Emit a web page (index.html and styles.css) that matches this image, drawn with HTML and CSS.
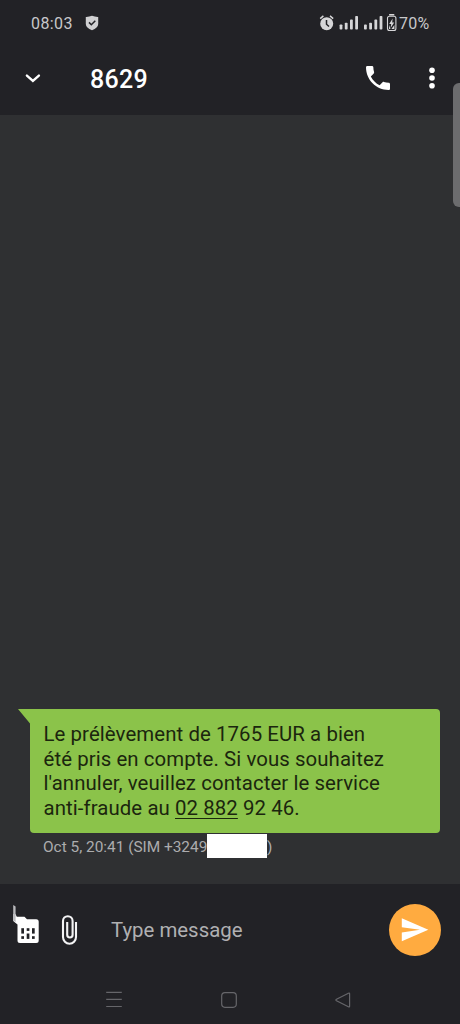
FILE: index.html
```html
<!DOCTYPE html>
<html lang="fr">
<head>
<meta charset="utf-8">
<title>8629</title>
<link rel="stylesheet" href="styles.css">
</head>
<body>
<div class="phone">
  <header class="top">
    <div class="status">
      <span class="clock">08:03</span>
      <svg class="shield" width="14" height="16" viewBox="0 0 14 16"><path d="M7 .8 Q10 2 13.2 1.9 V9 Q13 13 7 15.2 Q1 13 .8 9 V1.9 Q4 2 7 .8Z" fill="#d0d0d2"/><path d="M4 7.4l2.3 2.3 4-4" fill="none" stroke="#222226" stroke-width="1.5"/></svg>
      <svg class="indicators" width="78" height="20" viewBox="319 13 78 20">
        <g fill="#d6d6d8">
          <circle cx="326.7" cy="23.7" r="6.5"/>
          <path d="M326.5 20v4.2l2.5 2.3" fill="none" stroke="#222226" stroke-width="1.5"/>
          <path d="M320.2 18.6l3.2-2.7M333.2 18.6l-3.2-2.7" stroke="#d6d6d8" stroke-width="1.5" fill="none"/>
          <rect x="339.6" y="24.5" width="2.8" height="5" rx=".8"/><rect x="344.8" y="22.8" width="2.8" height="6.7" rx=".8"/><rect x="350" y="19.6" width="2.8" height="9.9" rx=".8"/><rect x="355.2" y="16" width="2.8" height="13.5" rx=".8"/>
          <rect x="364" y="24.5" width="2.8" height="5" rx=".8"/><rect x="369.2" y="22.8" width="2.8" height="6.7" rx=".8"/><rect x="374.4" y="19.6" width="2.8" height="9.9" rx=".8"/><rect x="379.6" y="16" width="2.8" height="13.5" rx=".8"/>
          <rect x="389" y="14" width="5.4" height="1.6" rx=".6"/>
          <rect x="387.5" y="16.2" width="8.4" height="14.3" rx="2" fill="none" stroke="#d6d6d8" stroke-width="1.1"/>
          <path d="M392.6 18.5l-3.4 5.5h2l-.6 4 3.6-5.5h-2z"/><path d="M389 25l1.5 4h-1.5zM394.4 25v4h-3z"/>
        </g>
      </svg>
      <span class="percent">70%</span>
    </div>
    <div class="bar">
      <svg class="chevron" width="18" height="12" viewBox="24 72 18 12"><path d="M26.9 75.6l6 5.4 6-5.4" fill="none" stroke="#fff" stroke-width="2.4" stroke-linecap="round"/></svg>
      <h1 class="title">8629</h1>
      <svg class="call" width="24" height="24" viewBox="3 3 18 18"><path fill="#fff" d="M6.62 10.79c1.44 2.83 3.76 5.14 6.59 6.59l2.2-2.2c.27-.27.67-.36 1.02-.24 1.12.37 2.33.57 3.57.57.55 0 1 .45 1 1V20c0 .55-.45 1-1 1-9.39 0-17-7.61-17-17 0-.55.45-1 1-1h3.5c.55 0 1 .45 1 1 0 1.25.2 2.45.57 3.57.11.35.03.74-.25 1.02l-2.2 2.2z"/></svg>
      <svg class="more" width="6" height="22" viewBox="0 0 6 22" fill="#fff"><circle cx="3" cy="3.2" r="2.8"/><circle cx="3" cy="11" r="2.8"/><circle cx="3" cy="18.8" r="2.8"/></svg>
    </div>
  </header>
  <main class="thread">
    <div class="scroll-handle"></div>
    <div class="bubble">
      <svg class="tail" width="13" height="16" viewBox="0 0 13 16"><path d="M0 0H13V16L12 14.5Z" fill="#8bc34a"/></svg>
      Le prélèvement de 1765 EUR a bien<br>été pris en compte. Si vous souhaitez<br>l'annuler, veuillez contacter le service<br>anti-fraude au <span class="link">02 882</span> 92 46.
    </div>
    <div class="meta"><span class="when">Oct 5, 20:41 (SIM +3249</span><span class="redacted"></span><span>)</span></div>
  </main>
  <footer class="bottom">
    <div class="compose">
      <svg class="sim" width="28" height="40" viewBox="12 904 28 40"><path d="M13.2 914H15.4L16.8 916.7H24.5L27 919.3H36.2a2.5 2.5 0 0 1 2.5 2.5v18.6a2.5 2.5 0 0 1-2.5 2.5H20a2.5 2.5 0 0 1-2.5-2.5V924.5L13.2 921Z" fill="#fff"/><path d="M13.2 905l2.4 1.4v15.6l-2.4-1.6z" fill="#b8b8bb"/><g fill="#222226"><rect x="21.3" y="928.2" width="2.7" height="5.4"/><rect x="26.7" y="928.2" width="2.7" height="2.7"/><rect x="32" y="928.2" width="2.7" height="5.4"/><rect x="21.3" y="936.2" width="2.7" height="2.7"/><rect x="26.7" y="933.5" width="2.7" height="5.4"/><rect x="32" y="936.2" width="2.7" height="2.7"/></g></svg>
      <svg class="clip" width="18" height="32" viewBox="60 914 18 32"><path d="M76 922V937a6.5 6.7 0 0 1-13 0V921a4.8 4.8 0 0 1 9.6 0v13.8a2.7 2.7 0 0 1-5.4 0V922" fill="none" stroke="#f4f4f5" stroke-width="2.1"/></svg>
      <span class="placeholder">Type message</span>
      <span class="send"><svg width="28" height="24" viewBox="401 918 28 24"><path d="M401.8 918.3L428.3 929.8 401.8 941.3V932.4L420 929.8 401.8 927.2Z" fill="#fff"/></svg></span>
    </div>
    <nav class="nav">
      <svg width="16" height="17" viewBox="0 0 16 17"><path d="M.2 1.3H15.8M.2 8.3H15.8M.2 15.5H15.8" stroke="#66666a" stroke-width="1.2"/></svg>
      <svg width="16" height="16" viewBox="0 0 16 16"><rect x=".7" y=".7" width="14.6" height="14.6" rx="3.2" fill="none" stroke="#66666a" stroke-width="1.2"/></svg>
      <svg width="16" height="16" viewBox="0 0 16 16"><path d="M14.6 1.8V14.2Q14.6 15.4 13.4 14.8L1.5 8.8Q.3 8 1.5 7.2L13.4 1.2Q14.6.6 14.6 1.8Z" fill="none" stroke="#66666a" stroke-width="1.2"/></svg>
    </nav>
  </footer>
</div>
</body>
</html>
```
FILE: styles.css
```css
* { box-sizing: border-box; }
body { margin: 0; background: #2f3032; font-family: Roboto, "Liberation Sans", sans-serif; }
svg { display: block; flex: none; }
.phone { width: 460px; height: 1024px; display: flex; flex-direction: column; overflow: hidden; }
.top { height: 115px; background: #222226; color: #fff; flex: none; }
.status { height: 46px; display: flex; align-items: center; padding-left: 31px; color: #c8c8ca; font-size: 16px; }
.clock { width: 54px; letter-spacing: 0.4px; }
.indicators { margin-left: 220px; }
.percent { margin-left: 2px; letter-spacing: 0.2px; }
.bar { height: 69px; display: flex; align-items: center; padding: 0 24px 5px; }
.title { margin: 4px 0 0 48px; width: 276px; font-size: 25px; font-weight: 500; line-height: 30px; letter-spacing: 0.3px; }
.more { margin-left: 39px; }
.thread { flex: 1; position: relative; display: flex; flex-direction: column; justify-content: flex-end; padding: 0 20px 22px 30px; }
.scroll-handle { position: absolute; top: -32px; right: 0; width: 7px; height: 124px; border-radius: 6px 0 0 6px; background: #6c6c6e; }
.bubble { position: relative; height: 124px; padding: 13px 13px 0 13.5px; border-radius: 0 4px 4px 4px; background: #8bc34a; color: #1b260e; font-size: 20.4px; letter-spacing: 0.08px; line-height: 24.5px; white-space: nowrap; }
.tail { position: absolute; left: -12px; top: 0; }
.link { text-decoration: underline; text-decoration-thickness: 1px; text-underline-offset: 3px; }
.meta { height: 29px; display: flex; padding-left: 13px; color: #acacae; font-size: 15.4px; line-height: 29px; white-space: nowrap; }
.when { width: 164px; }
.redacted { width: 60px; height: 24px; margin-top: 1px; background: #fff; }
.bottom { height: 140px; background: #222226; flex: none; }
.compose { height: 92px; display: flex; align-items: center; padding-left: 12px; }
.sim { margin-bottom: 12px; }
.clip { margin-left: 20px; }
.placeholder { margin-left: 33px; width: 277.5px; color: #b0b0b2; font-size: 20.4px; }
.send { width: 52px; height: 52px; border-radius: 50%; background: #ffab40; display: grid; place-items: center; }
.nav { height: 47px; display: flex; align-items: center; justify-content: space-between; padding: 0 109px 0 106px; }
```
